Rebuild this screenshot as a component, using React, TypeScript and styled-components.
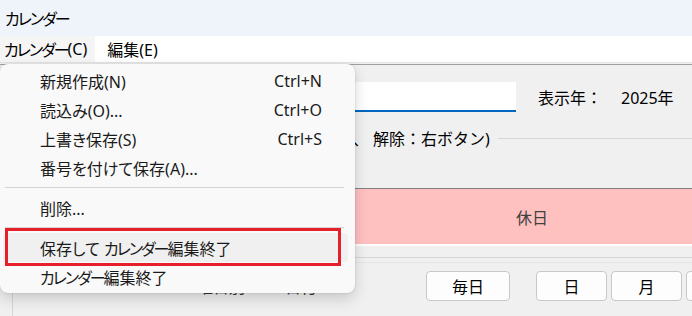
import styled, { createGlobalStyle } from 'styled-components'

const GlobalStyle = createGlobalStyle`
  html, body {
    margin: 0;
    padding: 0;
    background: #f0f0f0;
  }
  body {
    font-family: 'Noto Sans', 'Noto Sans CJK JP', sans-serif;
    font-size: 16px;
    color: #000;
  }
`

const Window = styled.div`
  position: relative;
  width: 692px;
  height: 316px;
  overflow: hidden;
  display: flex;
  flex-direction: column;
  background: #f0f0f0;
`

// Yu Gothic UI draws katakana narrower than Noto; tighten those runs
const Kana = styled.span`
  font-feature-settings: 'palt';
  letter-spacing: -2px;
`

const TitleBar = styled.div`
  height: 36px;
  flex: none;
  display: flex;
  align-items: center;
  padding-left: 5px;
  background: #eef4f9;
`

const MenuBar = styled.div`
  height: 26px;
  flex: none;
  display: flex;
  background: #fff;
  border-bottom: 1px solid #e4e4e4;
`

const MenuBarItem = styled.div<{ $open?: boolean }>`
  display: flex;
  align-items: center;
  padding: 0 8px 0 4px;
  margin-right: 8px;
  background: ${(p) => (p.$open ? '#f5f5f5' : 'transparent')};
`

const Body = styled.div`
  flex: 1;
  padding-top: 1px;
`

const Panel = styled.div`
  border-top: 1px solid #a0a0a0;
  display: flex;
  flex-direction: column;
`

const FormRow = styled.div`
  display: flex;
  align-items: center;
  height: 30px;
  margin-top: 17px;
  padding-left: 200px;
`

const NameInput = styled.div`
  width: 316px;
  height: 30px;
  flex: none;
  box-sizing: border-box;
  background: #fff;
  border-bottom: 2px solid #0067c0;
`

const Label = styled.span<{ $gap: number }>`
  margin-left: ${(p) => p.$gap}px;
  white-space: nowrap;
`

const LegendRow = styled.div`
  display: flex;
  align-items: center;
  height: 26px;
  margin-top: 13px;
  padding-left: 205px;
`

const Legend = styled.span`
  white-space: nowrap;
`

const LegendLine = styled.div`
  flex: 1;
  margin-left: 8px;
  border-top: 1px solid #d6d6d6;
`

const HolidayBand = styled.div`
  margin-top: 37px;
  display: flex;
  height: 55px;
  border-top: 1px solid #808080;
  border-bottom: 2px solid #fff;
  background: #ffc0c0;
`

const HolidayCell = styled.div`
  flex: 1;
  margin-left: 372px;
  display: flex;
  align-items: center;
  justify-content: center;
  color: #404040;
`

const GroupFrame = styled.div`
  margin: 11px 0 0 12px;
  border-top: 1px solid #d6d6d6;
  border-left: 1px solid #d6d6d6;
  height: 80px;
`

const GroupInner = styled.div`
  margin-top: 4px;
  border-top: 1px solid #e4e4e4;
  display: flex;
  align-items: center;
  padding-top: 8px;
`

const RadioGroup = styled.div`
  flex: none;
  display: flex;
  align-items: center;
  width: 249px;
  margin-left: 164px;
  gap: 20px;
`

const Radio = styled.label`
  display: flex;
  align-items: center;
  gap: 8px;
  color: #333;
`

const RadioDot = styled.span`
  width: 12px;
  height: 12px;
  border-radius: 50%;
  border: 1px solid #888;
  box-sizing: border-box;
  background: #fff;
`

const ButtonRow = styled.div`
  display: flex;
  gap: 4px;
`

const Button = styled.button<{ $w: number; $gapAfter?: number }>`
  width: ${(p) => p.$w}px;
  height: 30px;
  margin-right: ${(p) => p.$gapAfter ?? 0}px;
  padding: 0;
  border: 1px solid #c8c8c8;
  border-radius: 4px;
  background: #fdfdfd;
  font-family: inherit;
  font-size: 16px;
  color: #000;
  flex: none;
`

const PopupMenu = styled.div`
  position: absolute;
  left: 0;
  top: 64px;
  width: 355px;
  padding: 2px 0;
  background: #f9f9f9;
  border-radius: 8px;
  box-shadow: 0 6px 14px rgba(0, 0, 0, 0.16), 0 0 2px rgba(0, 0, 0, 0.18);
`

const MenuItem = styled.div<{ $active?: boolean }>`
  height: 29px;
  margin: 0 7px 0 3px;
  padding: 0 26px 0 37px;
  display: flex;
  align-items: center;
  border-radius: 4px;
  color: #1a1a1a;
  white-space: pre;
  font-feature-settings: 'palt';
  background: ${(p) => (p.$active ? '#f0f0f0' : 'transparent')};
`

const Shortcut = styled.span`
  margin-left: auto;
`

const Separator = styled.div`
  height: 11px;
  display: flex;
  align-items: center;
  padding: 0 11px 0 5px;

  &::after {
    content: '';
    flex: 1;
    border-top: 1px solid #d4d4d4;
  }
`

const Callout = styled.div`
  position: absolute;
  left: 5px;
  top: 228px;
  width: 336px;
  height: 38px;
  box-sizing: border-box;
  border: 3px solid #e5202a;
`

const menuItems = [
  { label: '新規作成(N)', key: 'Ctrl+N' },
  { label: '読込み(O)...', key: 'Ctrl+O' },
  { label: '上書き保存(S)', key: 'Ctrl+S' },
  { label: '番号を付けて保存(A)...' },
]

export default function App() {
  return (
    <Window>
      <GlobalStyle />
      <TitleBar>
        <Kana>カレンダー</Kana>
      </TitleBar>
      <MenuBar>
        <MenuBarItem $open>
          <Kana>カレンダー</Kana>(C)
        </MenuBarItem>
        <MenuBarItem>編集(E)</MenuBarItem>
      </MenuBar>

      <Body>
        <Panel>
          <FormRow>
            <NameInput />
            <Label $gap={22}>表示年：</Label>
            <Label $gap={19}>2025年</Label>
          </FormRow>
          <LegendRow>
            <Legend>(休日設定：左ボタン、 解除：右ボタン)</Legend>
            <LegendLine />
          </LegendRow>

          <HolidayBand>
            <HolidayCell>休日</HolidayCell>
          </HolidayBand>

          <GroupFrame>
            <GroupInner>
              <RadioGroup>
                <Radio>
                  <RadioDot />
                  曜日別
                </Radio>
                <Radio>
                  <RadioDot />
                  日付
                </Radio>
              </RadioGroup>
              <ButtonRow>
                <Button $w={84} $gapAfter={22}>毎日</Button>
                <Button $w={71}>日</Button>
                <Button $w={71}>月</Button>
                <Button $w={71}>火</Button>
              </ButtonRow>
            </GroupInner>
          </GroupFrame>
        </Panel>
      </Body>

      <PopupMenu>
        {menuItems.map((item) => (
          <MenuItem key={item.label}>
            {item.label}
            {item.key && <Shortcut>{item.key}</Shortcut>}
          </MenuItem>
        ))}
        <Separator />
        <MenuItem>削除...</MenuItem>
        <Separator />
        <MenuItem $active>
          保存して <Kana>カレンダー</Kana>編集終了
        </MenuItem>
        <MenuItem>
          <Kana>カレンダー</Kana>編集終了
        </MenuItem>
      </PopupMenu>
      <Callout />
    </Window>
  )
}
